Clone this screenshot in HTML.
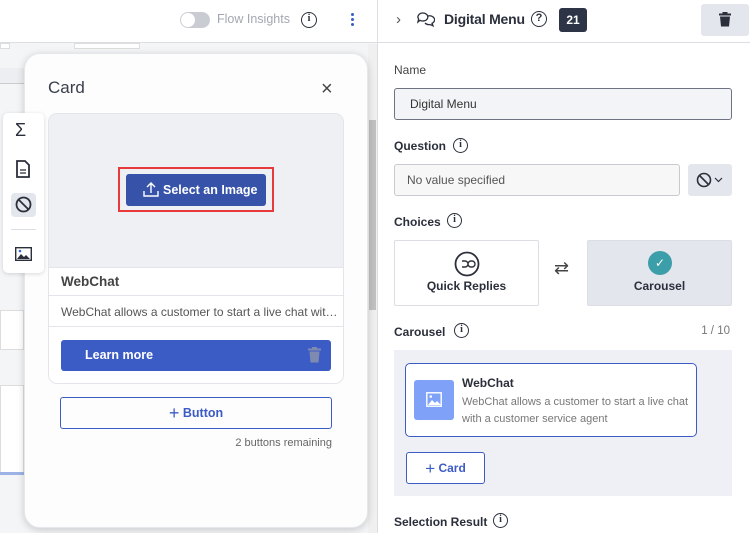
<!DOCTYPE html>
<html><head><meta charset="utf-8"><style>
*{box-sizing:border-box;margin:0;padding:0}
body{width:750px;height:533px;overflow:hidden;background:#fff;font-family:"Liberation Sans",Arial,sans-serif;position:relative;color:#2b2f3b}
.a{position:absolute}
.lbl{font-size:12px;font-weight:bold;color:#2b2f3b}
.info{display:inline-block;width:15px;height:15px;border:1.6px solid #2b2f3b;border-radius:50%;font:bold 10px/12px "Liberation Serif",serif;text-align:center;color:#2b2f3b}
</style></head><body>
<div class="a" style="left:0;top:43px;width:377px;height:490px;background:#f4f5f7"></div>
<div class="a" style="left:0;top:43px;width:10px;height:6px;background:#fff;border:1px solid #ddd"></div>
<div class="a" style="left:74px;top:43px;width:66px;height:6px;background:#fff;border:1px solid #ddd"></div>
<div class="a" style="left:0;top:68px;width:24px;height:16px;background:#eceef2;border-bottom:1px solid #ccc"></div>
<div class="a" style="left:0;top:310px;width:24px;height:40px;background:#fff;border:1px solid #ddd"></div>
<div class="a" style="left:0;top:385px;width:24px;height:90px;background:#fff;border:1px solid #ddd"></div>
<div class="a" style="left:0;top:472px;width:24px;height:3px;background:#9db3e8"></div>
<div class="a" style="left:377px;top:0;width:1px;height:533px;background:#dcdee4"></div>
<div class="a" style="left:0;top:0;width:377px;height:43px;background:#fff;border-bottom:1px solid #dcdee4"></div>
<div class="a" style="left:180px;top:12px;width:30px;height:16px;border-radius:8px;background:#c9ccd3"></div>
<div class="a" style="left:181px;top:13px;width:14px;height:14px;border-radius:50%;background:#fff"></div>
<div class="a" style="left:217px;top:12px;font-size:12.5px;color:#a3a7b1">Flow Insights</div>
<div class="a info" style="left:301px;top:12px;width:16px;height:16px">i</div>
<div class="a" style="left:351px;top:13px;width:3px;height:3px;background:#3c5cc5;border-radius:50%;box-shadow:0 5px 0 #3c5cc5,0 10px 0 #3c5cc5"></div>
<div class="a" style="left:368px;top:44px;width:9px;height:489px;background:#f0f0f0"></div>
<div class="a" style="left:369px;top:120px;width:7px;height:190px;background:#c1c1c1"></div>
<div class="a" style="left:24px;top:53px;width:344px;height:475px;background:#fdfdfe;border-radius:16px;box-shadow:0 2px 8px rgba(0,0,0,.18);border:1px solid #e6e7eb"></div>
<div class="a" style="left:48px;top:78px;font-size:17px;color:#3a3f4c">Card</div>
<div class="a" style="left:321px;top:79px;font-size:20px;color:#444;line-height:20px">×</div>
<div class="a" style="left:48px;top:113px;width:296px;height:271px;border:1px solid #e3e5ea;border-radius:9px;background:#fff;overflow:hidden">
  <div style="height:154px;background:#eff0f4"></div>
</div>
<div class="a" style="left:118px;top:167px;width:156px;height:45px;border:2px solid #e8393c"></div>
<div class="a" style="left:126px;top:174px;width:140px;height:32px;background:#3653a9;border-radius:3px;color:#fff;font-size:12.5px;font-weight:bold;line-height:32px;padding-left:37px">Select an Image</div>
<svg class="a" style="left:143px;top:181px" width="16" height="17" viewBox="0 0 16 17" fill="none" stroke="#fff" stroke-width="1.4"><path d="M8 12V2M4 6l4-4 4 4M1 10v5h14v-5"/></svg>
<div class="a" style="left:49px;top:267px;width:294px;height:29px;border-top:1px solid #e3e5ea;border-bottom:1px solid #e3e5ea;font-size:13.5px;font-weight:bold;color:#444;padding:6px 12px">WebChat</div>
<div class="a" style="left:49px;top:298px;width:294px;height:29px;border-bottom:1px solid #e3e5ea;font-size:12px;color:#555;padding:7px 12px;white-space:nowrap">WebChat allows a customer to start a live chat wit…</div>
<div class="a" style="left:61px;top:340px;width:270px;height:31px;background:#3c5cc5;border-radius:3px;color:#fff;font-size:12.5px;font-weight:bold;line-height:31px;padding-left:24px">Learn more</div>
<svg class="a" style="left:308px;top:347px" width="13" height="16" viewBox="0 0 13 16" fill="#7f8ab0"><rect x="0" y="1.5" width="13" height="2"/><rect x="4" y="0" width="5" height="2"/><path d="M1.5 4.5h10l-1 11h-8z"/></svg>
<div class="a" style="left:60px;top:397px;width:272px;height:32px;border:1.3px solid #3c5cc5;border-radius:3px;color:#3c5cc5;font-size:12.5px;font-weight:bold;line-height:30px;text-align:center"><span style="font-size:18px;font-weight:normal;vertical-align:-2px">+</span> Button</div>
<div class="a" style="left:180px;top:437px;width:152px;text-align:right;font-size:11px;color:#666">2 buttons remaining</div>
<div class="a" style="left:3px;top:113px;width:41px;height:160px;background:#fff;border-radius:5px;box-shadow:0 1px 4px rgba(0,0,0,.15)"></div>
<div class="a" style="left:15px;top:120px;font-size:18px;color:#2b2f3b">Σ</div>
<svg class="a" style="left:16px;top:160px" width="14" height="18" viewBox="0 0 14 18" fill="none" stroke="#2b2f3b" stroke-width="1.8"><path d="M1 1h8l4 4v12H1z"/><path d="M4 10h6M4 13h6" stroke-width="1.3"/></svg>
<div class="a" style="left:11px;top:193px;width:25px;height:24px;background:#e4e6ee;border-radius:4px"></div>
<svg class="a" style="left:15px;top:196px" width="17" height="17" viewBox="0 0 17 17" fill="none" stroke="#2b2f3b" stroke-width="1.8"><circle cx="8.5" cy="8.5" r="7"/><path d="M3.5 3.5l10 10"/></svg>
<div class="a" style="left:11px;top:229px;width:25px;height:1px;background:#dcdee4"></div>
<svg class="a" style="left:15px;top:247px" width="17" height="14" viewBox="0 0 17 14"><rect x="0.7" y="0.7" width="15.6" height="12.6" fill="none" stroke="#2b2f3b" stroke-width="1.4"/><path d="M2 12l4-5 3 3 2-2 4 4z" fill="#2b2f3b"/><circle cx="5" cy="4" r="1.3" fill="#2b6bd6"/></svg>
<div class="a" style="left:378px;top:0;width:372px;height:43px;border-bottom:1px solid #dcdee4"></div>
<div class="a" style="left:396px;top:11px;font-size:15px;color:#555">›</div>
<svg class="a" style="left:417px;top:12px" width="18" height="15" viewBox="0 0 18 15" fill="none" stroke="#2b2f3b" stroke-width="1.3"><path d="M6 1a5 4 0 1 1-3 7.3L1 10l.6-3A5 4 0 0 1 6 1z"/><path d="M11 4a5 4 0 0 1 4 7.3l1 2.5-3-1.3a5 4 0 0 1-5-1.5"/></svg>
<div class="a" style="left:444px;top:11px;font-size:14px;font-weight:bold;color:#2b2f3b;letter-spacing:-0.2px">Digital Menu</div>
<div class="a" style="left:531px;top:11px;width:16px;height:16px;border:1.5px solid #2b2f3b;border-radius:50%;font-size:11px;text-align:center;line-height:13px;font-weight:bold">?</div>
<div class="a" style="left:559px;top:8px;width:28px;height:24px;background:#2d3446;border-radius:3px;color:#fff;font-size:12px;font-weight:bold;text-align:center;line-height:24px">21</div>
<div class="a" style="left:701px;top:4px;width:48px;height:32px;background:#e4e6ee;border-radius:3px"></div>
<svg class="a" style="left:719px;top:12px" width="12" height="15" viewBox="0 0 12 15" fill="#2b2f3b"><rect x="0" y="1.5" width="12" height="2"/><rect x="3.5" y="0" width="5" height="2"/><path d="M1 4.5h10l-1 10H2z"/></svg>
<div class="a" style="left:394px;top:63px;font-size:12px;color:#444">Name</div>
<div class="a" style="left:394px;top:88px;width:338px;height:32px;background:#f3f4f7;border:1px solid #6f7381;border-radius:3px;font-size:12px;line-height:30px;padding-left:15px;color:#333">Digital Menu</div>
<div class="a lbl" style="left:394px;top:139px">Question</div>
<div class="a info" style="left:453px;top:138px">i</div>
<div class="a" style="left:394px;top:164px;width:286px;height:32px;background:#f7f7f8;border:1px solid #c8cad1;border-radius:3px;font-size:12px;line-height:30px;padding-left:12px;color:#555">No value specified</div>
<div class="a" style="left:688px;top:164px;width:44px;height:32px;background:#e4e6ee;border-radius:3px"></div>
<svg class="a" style="left:696px;top:172px" width="30" height="16" viewBox="0 0 30 16" fill="none" stroke="#2b2f3b" stroke-width="1.6"><circle cx="8" cy="8" r="6.5"/><path d="M3.5 3.5l9 9"/><path d="M19 6l3.5 3.5L26 6" stroke-width="1.2"/></svg>
<div class="a lbl" style="left:394px;top:215px">Choices</div>
<div class="a info" style="left:447px;top:213px">i</div>
<div class="a" style="left:394px;top:240px;width:145px;height:66px;border:1px solid #dcdee4;border-radius:2px;font-size:12px;font-weight:bold;text-align:center;padding-top:38px">Quick Replies</div>
<svg class="a" style="left:454px;top:251px" width="26" height="26" viewBox="0 0 26 26" fill="none" stroke="#2b2f3b" stroke-width="1.8"><circle cx="13" cy="13" r="11.5"/><path d="M8 10h3a3 3 0 0 1 0 6H8M18 10a3 3 0 0 1 0 6h-1a3 3 0 0 1 0-6z" stroke-width="1.4"/></svg>
<div class="a" style="left:554px;top:258px;font-size:18px;color:#444">⇄</div>
<div class="a" style="left:587px;top:240px;width:145px;height:66px;background:#e4e6ee;border:1px solid #dcdee4;border-radius:2px;font-size:12px;font-weight:bold;text-align:center;padding-top:38px">Carousel</div>
<div class="a" style="left:648px;top:251px;width:24px;height:24px;border-radius:50%;background:#3b9ea8;color:#fff;font-size:12px;text-align:center;line-height:24px">✓</div>
<div class="a lbl" style="left:394px;top:325px">Carousel</div>
<div class="a info" style="left:454px;top:323px">i</div>
<div class="a" style="left:690px;top:325px;width:40px;text-align:right;font-size:11.5px;color:#777">1 / 10</div>
<div class="a" style="left:394px;top:350px;width:338px;height:146px;background:#eef0f5"></div>
<div class="a" style="left:405px;top:363px;width:292px;height:74px;background:#fff;border:1.3px solid #3c5cc5;border-radius:5px"></div>
<div class="a" style="left:414px;top:380px;width:40px;height:40px;background:#7fa2f8;border-radius:3px"></div>
<svg class="a" style="left:426px;top:392px" width="16" height="15" viewBox="0 0 16 15"><rect x="0.8" y="0.8" width="14.4" height="13.4" fill="none" stroke="#fff" stroke-width="1.4"/><path d="M2 13l4-5 3 3 2-2 4 4z" fill="#fff"/><circle cx="4.8" cy="4.5" r="1.3" fill="#fff"/></svg>
<div class="a" style="left:462px;top:376px;font-size:12px;font-weight:bold;color:#2b2f3b">WebChat</div>
<div class="a" style="left:462px;top:394px;font-size:11px;line-height:16.5px;color:#777;width:230px">WebChat allows a customer to start a live chat with a customer service agent</div>
<div class="a" style="left:406px;top:452px;width:79px;height:32px;background:#fff;border:1.3px solid #3c5cc5;border-radius:3px;color:#3c5cc5;font-size:12px;font-weight:bold;text-align:center;line-height:30px"><span style="font-size:17px;font-weight:normal;vertical-align:-2px">+</span> Card</div>
<div class="a lbl" style="left:394px;top:515px">Selection Result</div>
<div class="a info" style="left:493px;top:513px">i</div>
</body></html>
